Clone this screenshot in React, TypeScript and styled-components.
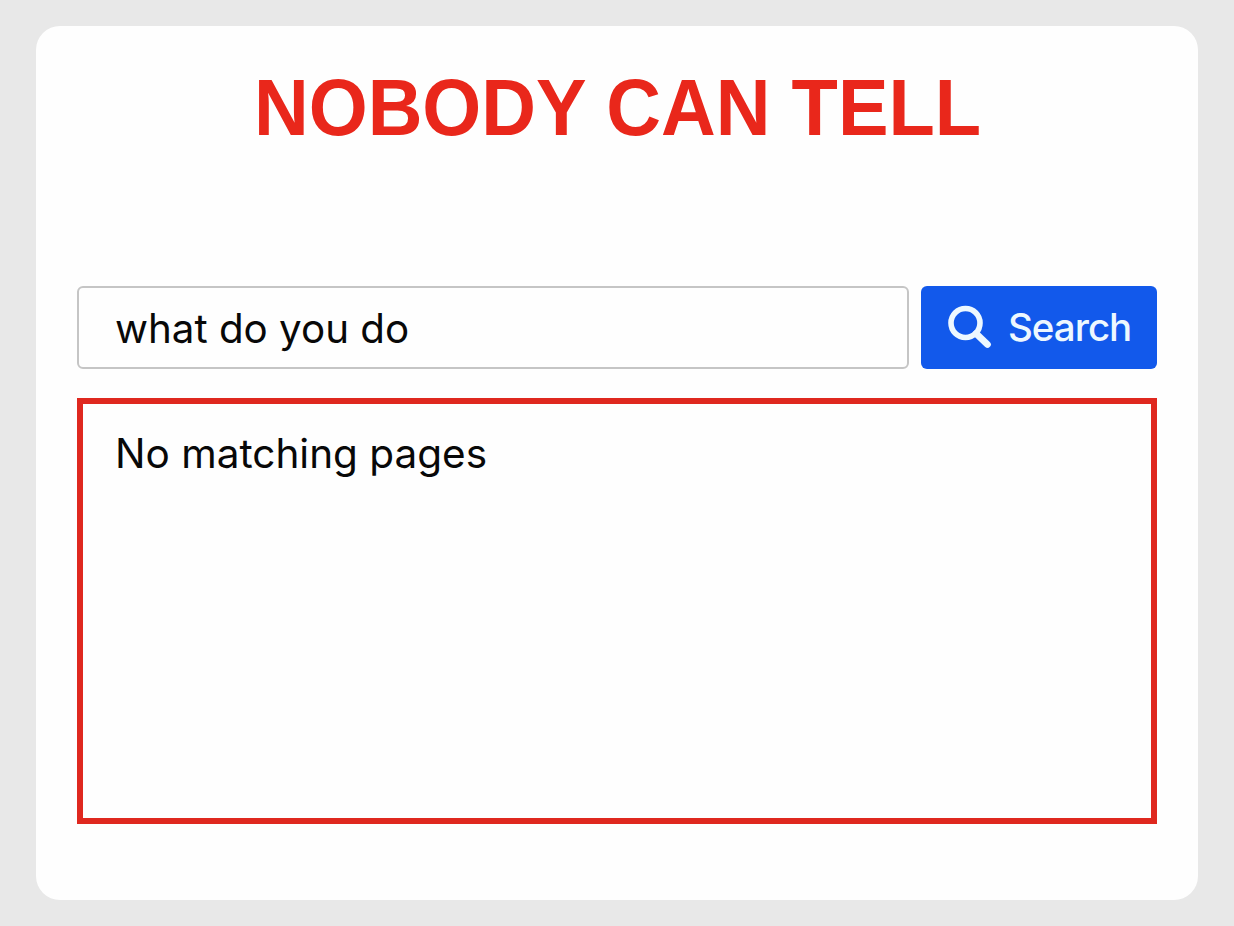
import type { FormEvent } from "react";
import styled, { createGlobalStyle } from "styled-components";

const GlobalStyle = createGlobalStyle`
  * {
    box-sizing: border-box;
  }

  body {
    margin: 0;
    background: #e8e8e8;
    font-family: Inter, "Liberation Sans", sans-serif;
  }
`;

const Page = styled.div`
  height: 926px;
  padding: 26px 36px;
`;

const Card = styled.main`
  height: 874px;
  padding: 38px 41px 0;
  background: #fefefe;
  border-radius: 24px;
`;

const Title = styled.h1`
  margin: 0 0 132px;
  height: 90px;
  padding-left: 1px;
  color: #e9271b;
  font-family: "Liberation Sans", Arial, sans-serif;
  font-size: 75.8px;
  font-weight: 700;
  line-height: 88px;
  text-align: center;
  white-space: nowrap;
  transform: scaleY(1.05);
`;

const SearchForm = styled.form`
  display: flex;
  gap: 12px;
  height: 83px;
  margin-bottom: 29px;
`;

const SearchInput = styled.input`
  flex: 1;
  min-width: 0;
  padding: 1px 36px 0;
  color: #080808;
  background: #fefefe;
  border: 2px solid #c5c5c5;
  border-radius: 6px;
  outline: none;
  font-family: inherit;
  font-size: 40.3px;
`;

const SearchButton = styled.button`
  display: flex;
  align-items: center;
  gap: 16px;
  width: 236px;
  padding: 0 0 1px 26px;
  color: #edf8ff;
  background: #1259eb;
  border: 0;
  border-radius: 6px;
  font-family: inherit;
  font-size: 38.5px;
  font-weight: 500;
  letter-spacing: -1px;
`;

const Results = styled.section`
  height: 426px;
  padding: 25px 32px;
  border: 6px solid #df281f;
`;

const Message = styled.p`
  margin: 0;
  color: #080808;
  font-size: 40.5px;
  line-height: 50px;
`;

const SearchIcon = () => (
  <svg width="45" height="44" viewBox="0 0 45 44" fill="none" stroke="currentColor">
    <circle cx="18.5" cy="18" r="14.5" strokeWidth="5.6" />
    <path d="M29 28.5L40.5 39.5" strokeWidth="6.6" strokeLinecap="round" />
  </svg>
);

export default function App() {
  const handleSubmit = (e: FormEvent) => e.preventDefault();

  return (
    <Page>
      <GlobalStyle />
      <Card>
        <Title>NOBODY CAN TELL</Title>
        <SearchForm onSubmit={handleSubmit}>
          <SearchInput defaultValue="what do you do" aria-label="Search" />
          <SearchButton type="submit">
            <SearchIcon />
            Search
          </SearchButton>
        </SearchForm>
        <Results>
          <Message>No matching pages</Message>
        </Results>
      </Card>
    </Page>
  );
}
